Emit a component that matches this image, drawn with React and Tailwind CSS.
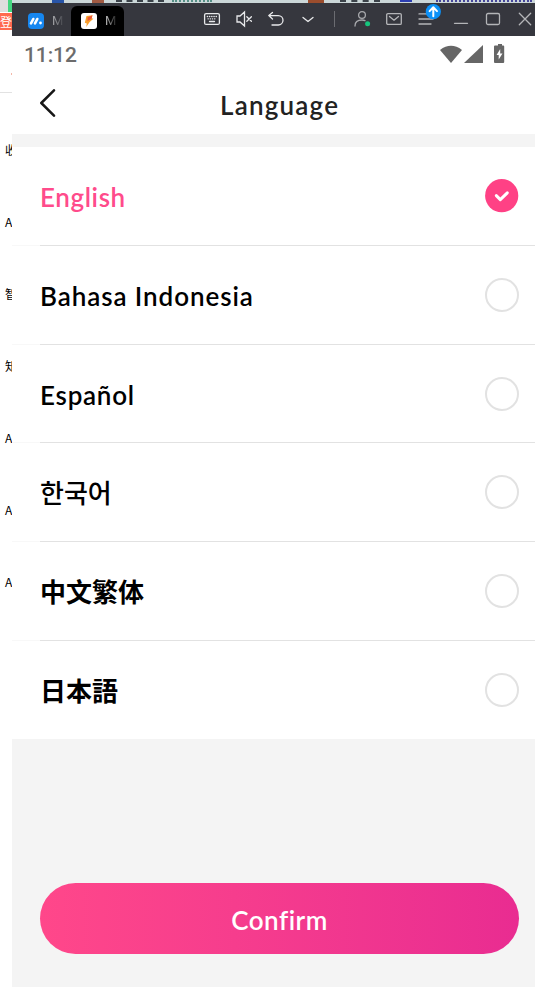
import React, { useState } from 'react';

const languages = [
  { id: 'en', label: 'English', style: 'tracking-[0.6px] font-semibold' },
  { id: 'id', label: 'Bahasa Indonesia', style: 'tracking-[0.92px] font-semibold' },
  { id: 'es', label: 'Español', style: 'tracking-[0.75px] font-semibold' },
  { id: 'ko', label: '한국어', style: "relative -top-0.5 font-['Noto_Sans_CJK_KR',sans-serif] font-medium" },
  { id: 'zh', label: '中文繁体', style: "relative -top-0.5 font-['Noto_Sans_CJK_SC',sans-serif] font-bold" },
  { id: 'ja', label: '日本語', style: "relative -top-0.5 font-['Noto_Sans_CJK_JP',sans-serif] font-bold" },
];

const sideItems = ['收', 'A', '智', '知', 'A', 'A', 'A'];

const Icon = ({ className = '', children }) => (
  <svg
    viewBox="0 0 16 16"
    className={`h-4 w-4 shrink-0 overflow-visible ${className}`}
    fill="none"
    stroke="currentColor"
    strokeWidth="1.3"
    strokeLinecap="round"
    strokeLinejoin="round"
  >
    {children}
  </svg>
);

// Part of the window behind, only its right-hand edge shows
const SideWindow = () => (
  <aside className="flex w-3 shrink-0 flex-col overflow-hidden bg-white font-['Noto_Sans_CJK_SC',sans-serif]">
    <div className="flex h-3 shrink-0 bg-[#dedede]">
      <div className="ml-2 h-3 w-1 bg-[#43d67f]" />
    </div>
    <div className="mt-px flex h-[17px] shrink-0 items-center overflow-hidden bg-[#ff694f] text-[12px] leading-none whitespace-nowrap text-white">登</div>
    <div className="flex h-[63px] shrink-0 items-end border-b border-[#e2e2e2] pb-[17px] pl-[11px]">
      <div className="h-0.5 w-px bg-[#f4b7a8]" />
    </div>
    <div className="mt-[21px] flex flex-col">
      {sideItems.map((item, i) => (
        <div key={i} className="flex h-[72px] shrink-0 items-start pl-[5px] text-[12px] leading-[72px] text-black">
          {item}
        </div>
      ))}
    </div>
  </aside>
);

const TitleBar = () => (
  <div className="shrink-0">
    <div className="flex h-[3px] bg-[#cbd7d8]">
      <div className="ml-10 h-[3px] w-3 bg-[#2855a8]" />
      <div className="ml-7 h-[3px] w-3 bg-[#a15b43]" />
      <div className="ml-3 h-[2px] w-12 border-t-2 border-dashed border-[#3b4249]" />
      <div className="ml-2 h-[2px] w-10 border-t-2 border-dotted border-[#568f86]" />
      <div className="ml-24 h-[3px] w-4 bg-[#9b4d2d]" />
      <div className="ml-4 h-[2px] w-10 border-t-2 border-dashed border-[#3b4249]" />
      <div className="ml-5 h-[2px] w-3 bg-[#2d3fb1]" />
      <div className="ml-6 h-[2px] w-24 border-t-2 border-dotted border-[#47479b]" />
    </div>
    <div className="flex h-[33px] bg-[#36373e] text-[#e8e9eb]">
      <div className="flex w-[59px] items-center pt-[3px] pl-4">
        <svg viewBox="0 0 16 16" className="h-4 w-4">
          <rect width="16" height="16" rx="4" fill="#1687f0" />
          <path d="M3 10.3 5.3 6M7 10.3 9.3 6" stroke="#fff" strokeWidth="2.6" strokeLinecap="round" />
          <circle cx="12.5" cy="10" r="1.4" fill="#fff" />
        </svg>
        <span className="ml-2 bg-gradient-to-r from-[#b3b4b7] to-[#45464c] bg-clip-text font-[Roboto,sans-serif] text-[13px] text-transparent">M</span>
      </div>
      <div className="mt-[3px] flex w-[53px] items-center rounded-t-md bg-black pl-[10px]">
        <svg viewBox="0 0 16 16" className="h-4 w-4">
          <rect width="16" height="16" rx="3" fill="#fff" />
          <path d="m5.5 3 6-.8-1 3 1.9.5L8.7 9l-3.5 5 .6-3.6-2-.6Z" fill="#f9a02c" />
          <path d="m6.5 4.5 5-2.3-1 3.6-4 2.4Z" fill="#ed5936" />
        </svg>
        <span className="ml-2 bg-gradient-to-r from-[#d5d5d5] to-[#222] bg-clip-text font-[Roboto,sans-serif] text-[13px] text-transparent">M</span>
      </div>
      <div className="ml-20 flex flex-1 items-center gap-4 pb-px">
        <Icon>
          <rect x=".6" y="2.6" width="14.8" height="10.8" rx="1.5" />
          <path d="M3.3 5.5h9.5M4 7.8h8.5" strokeDasharray=".3 1.9" />
          <path d="M5.5 10.5h5" />
        </Icon>
        <Icon>
          <path d="M1 5h3l4.5-4v14L4 11H1ZM10.8 5.7l4.6 4.6M15.4 5.7l-4.6 4.6" strokeLinejoin="miter" />
        </Icon>
        <Icon>
          <path d="M4.5 1.5.8 4.6 4.5 8M1 4.6h9.3a4.7 4.7 0 0 1 0 9.4H4" />
        </Icon>
        <Icon>
          <path d="m3 6.5 5 4 5-4" />
        </Icon>
        <div className="ml-0.5 h-4 w-px bg-[#6b6c71]" />
        <Icon className="ml-[3px] text-[#a7a8ac]">
          <circle cx="8" cy="4" r="3.4" />
          <path d="M1 15c0-4 3-6 7-6q1.8 0 3 .6" />
          <circle cx="13.6" cy="12.7" r="2.5" fill="#16c57d" stroke="none" />
        </Icon>
        <Icon className="text-[#b4b5b8]">
          <rect x=".7" y="2.6" width="14.6" height="10.8" rx="1.2" />
          <path d="m3.5 5.5 4.5 3.7 4.5-3.7" />
        </Icon>
        <Icon className="text-[#b4b5b8]">
          <path d="M1 2.9h14M1 8h14M1 13h12" />
          <circle cx="15.3" cy=".7" r="7.6" fill="#0c91f8" stroke="none" />
          <path d="M15.3 5.2v-8.8M11.6.1l3.7-3.8L19 .1" stroke="#fff" strokeWidth="2" />
        </Icon>
        <Icon className="ml-[3px] text-[#b4b5b8]">
          <path d="M1.5 12.3h13" />
        </Icon>
        <Icon className="text-[#b4b5b8]">
          <rect x="1.5" y="2.5" width="13" height="11" rx="1.5" />
        </Icon>
        <Icon className="text-[#b4b5b8]">
          <path d="m2.3 2.3 11.4 11.4M13.7 2.3 2.3 13.7" />
        </Icon>
      </div>
    </div>
  </div>
);

const StatusBar = () => (
  <div className="flex h-[38px] shrink-0 items-center justify-between pr-[27px] pl-3 text-[#666]">
    <span className="mt-px font-[Roboto,sans-serif] text-[21px] leading-none font-medium tracking-[-0.1px] text-[#6c6c6c]">11:12</span>
    <svg viewBox="0 0 68 20" className="mt-[-2px] h-5 w-[68px]" fill="currentColor">
      <path d="M0 6Q11-2.3 22 6L11 19Z" />
      <path d="M43 1v18H24Z" />
      <path d="M57-.3h4v1.7h1.2a1 1 0 0 1 1 1V18a1 1 0 0 1-1 1H54a1 1 0 0 1-1-1V2.4a1 1 0 0 1 1-1h3Z" transform="translate(1 0)" />
      <path d="m60.2 5-3.6 6h2.1v4.6l3.8-6.2h-2.3Z" fill="#fff" />
    </svg>
  </div>
);

const Radio = ({ checked }) => (
  checked ? (
    <svg viewBox="0 0 34 34" className="h-[34px] w-[34px]" fill="none">
      <circle cx="16.7" cy="16.7" r="16.6" fill="#ff4185" />
      <path d="m11.3 16.6 4 4 7-6.8" stroke="#fff" strokeWidth="3" strokeLinecap="round" strokeLinejoin="round" />
    </svg>
  ) : (
    <div className="h-[34px] w-[34px] rounded-full border-2 border-[#e2e2e2] bg-white" />
  )
);

const App = () => {
  const [selected, setSelected] = useState('en');

  return (
    <div className="flex h-[987px] w-[535px] overflow-hidden bg-white">
      <SideWindow />
      <main className="flex min-w-0 flex-1 flex-col bg-white font-[Lato,sans-serif]">
        <TitleBar />
        <StatusBar />

        {/* Header */}
        <header className="flex h-[60px] shrink-0 items-center pb-[3px]">
          <button aria-label="Back" className="ml-[27px] w-[18px]">
            <svg viewBox="0 0 18 28" className="h-7 w-[18px]" fill="none" stroke="#171717" strokeWidth="2.5" strokeLinecap="round" strokeLinejoin="round">
              <path d="M15 1.3 2.3 14 15 26.7" />
            </svg>
          </button>
          <h1 className="mt-1 ml-[163px] text-[26px] leading-none font-semibold tracking-[1.2px] text-[#222]">Language</h1>
        </header>
        <div className="h-[13px] shrink-0 bg-[#f4f4f4]" />

        {/* Languages */}
        <div className="flex h-[593px] shrink-0 flex-col">
          {languages.map((lang, i) => (
            <button
              key={lang.id}
              onClick={() => setSelected(lang.id)}
              className="flex flex-1 items-stretch text-left"
            >
              <span className={`w-7 border-b ${i < languages.length - 1 ? 'border-[#f8f8f8]' : 'border-transparent'}`} />
              <span className={`flex flex-1 items-center justify-between border-b pr-4 ${i < languages.length - 1 ? 'border-[#e2e2e2]' : 'border-transparent'}`}>
                <span className={`mt-[3px] text-[26px] leading-none ${lang.style} ${selected === lang.id ? 'text-[#ff4b8b]' : 'text-black'}`}>
                  {lang.label}
                </span>
                <Radio checked={selected === lang.id} />
              </span>
            </button>
          ))}
        </div>

        {/* Confirm */}
        <footer className="-mt-px flex flex-1 flex-col justify-end bg-[#f4f4f4] pr-4 pb-[33px] pl-7">
          <button className="flex h-[71px] items-center justify-center rounded-full bg-gradient-to-r from-[#ff478a] to-[#e92c91] pt-[3px] text-[26px] font-semibold tracking-[0.5px] text-white">
            Confirm
          </button>
        </footer>
      </main>
    </div>
  );
};

export default App;
